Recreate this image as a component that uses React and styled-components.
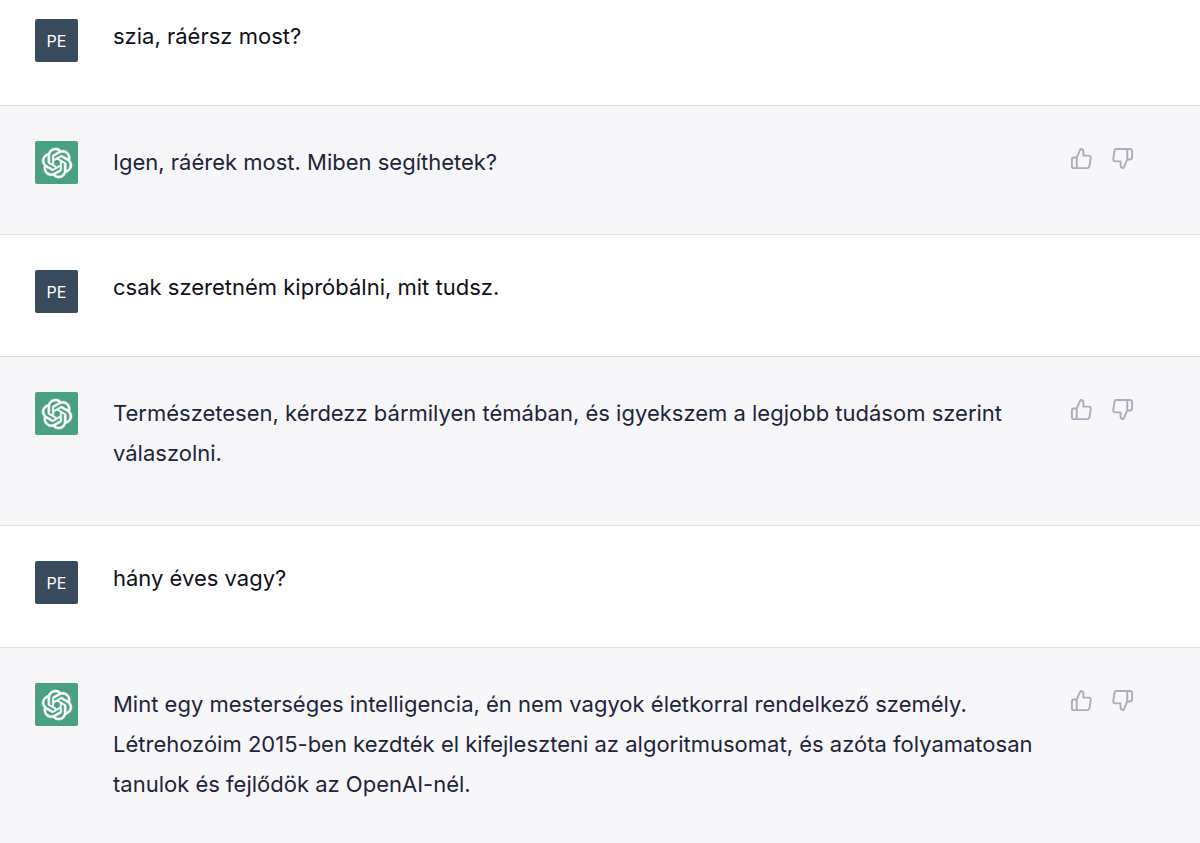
import React from "react";

import { FiThumbsDown, FiThumbsUp } from "react-icons/fi";
import { SiOpenai } from "react-icons/si";
import styled, { createGlobalStyle } from "styled-components";

const messages = [
  { from: "user", text: "szia, ráérsz most?" },
  { from: "assistant", text: "Igen, ráérek most. Miben segíthetek?" },
  { from: "user", text: "csak szeretném kipróbálni, mit tudsz." },
  {
    from: "assistant",
    text: "Természetesen, kérdezz bármilyen témában, és igyekszem a legjobb tudásom szerint válaszolni.",
  },
  { from: "user", text: "hány éves vagy?" },
  {
    from: "assistant",
    text: "Mint egy mesterséges intelligencia, én nem vagyok életkorral rendelkező személy. Létrehozóim 2015-ben kezdték el kifejleszteni az algoritmusomat, és azóta folyamatosan tanulok és fejlődök az OpenAI-nél.",
  },
];

const UserMessage = ({ text }) => (
  <UserRow>
    <Avatar $color="#394a5d">PE</Avatar>
    <UserText>{text}</UserText>
  </UserRow>
);

const AssistantMessage = ({ text }) => (
  <AssistantRow>
    <Avatar $color="#4aa181">
      <Logo size={30} aria-label="ChatGPT" />
    </Avatar>
    <AssistantText>{text}</AssistantText>
    <Feedback>
      <VoteButton type="button" aria-label="Tetszik">
        <FiThumbsUp size={23} />
      </VoteButton>
      <VoteButton type="button" aria-label="Nem tetszik">
        <FiThumbsDown size={23} />
      </VoteButton>
    </Feedback>
  </AssistantRow>
);

const App = () => {
  return (
    <>
      <GlobalStyle />
      <Conversation>
        {messages.map(({ from, text }) =>
          from === "user" ? (
            <UserMessage key={text} text={text} />
          ) : (
            <AssistantMessage key={text} text={text} />
          )
        )}
      </Conversation>
    </>
  );
};

export default App;

const GlobalStyle = createGlobalStyle`
  * {
    box-sizing: border-box;
  }

  body {
    margin: 0;
    background: #f7f7f9;
    font-family: Inter, "Liberation Sans", sans-serif;
    font-size: 22px;
  }
`;

const Conversation = styled.main`
  width: 100%;
`;

const Row = styled.article`
  display: flex;
  align-items: flex-start;
  padding: 35px 60px 43px 35px;
  border-bottom: 1px solid #dfdfe3;
`;

const UserRow = styled(Row)`
  background: #ffffff;

  &:first-child {
    padding-top: 19px;
  }
`;

const AssistantRow = styled(Row)`
  background: #f7f7f9;

  &:last-child {
    padding-bottom: 36px;
    border-bottom: 0;
  }
`;

const Avatar = styled.div`
  display: flex;
  flex-shrink: 0;
  align-items: center;
  justify-content: center;
  width: 43px;
  height: 43px;
  margin-right: 35px;
  border-radius: 2px;
  background: ${({ $color }) => $color};
  color: #ffffff;
  font-size: 16px;
  line-height: 18px;
`;

const Logo = styled(SiOpenai)`
  overflow: visible;
  stroke: currentColor;
  stroke-width: 0.5;
`;

const Text = styled.p`
  flex: 1;
  margin: 0;
`;

const UserText = styled(Text)`
  color: #10101a;
  line-height: 34px;
`;

const AssistantText = styled(Text)`
  padding: 1px 0 9px;
  color: #1f2439;
  line-height: 40px;
`;

const Feedback = styled.div`
  display: flex;
  gap: 6px;
  margin-left: 29px;
`;

const VoteButton = styled.button`
  display: flex;
  padding: 6px;
  border: 0;
  border-radius: 6px;
  background: transparent;
  color: #acacbe;
  cursor: pointer;
`;
